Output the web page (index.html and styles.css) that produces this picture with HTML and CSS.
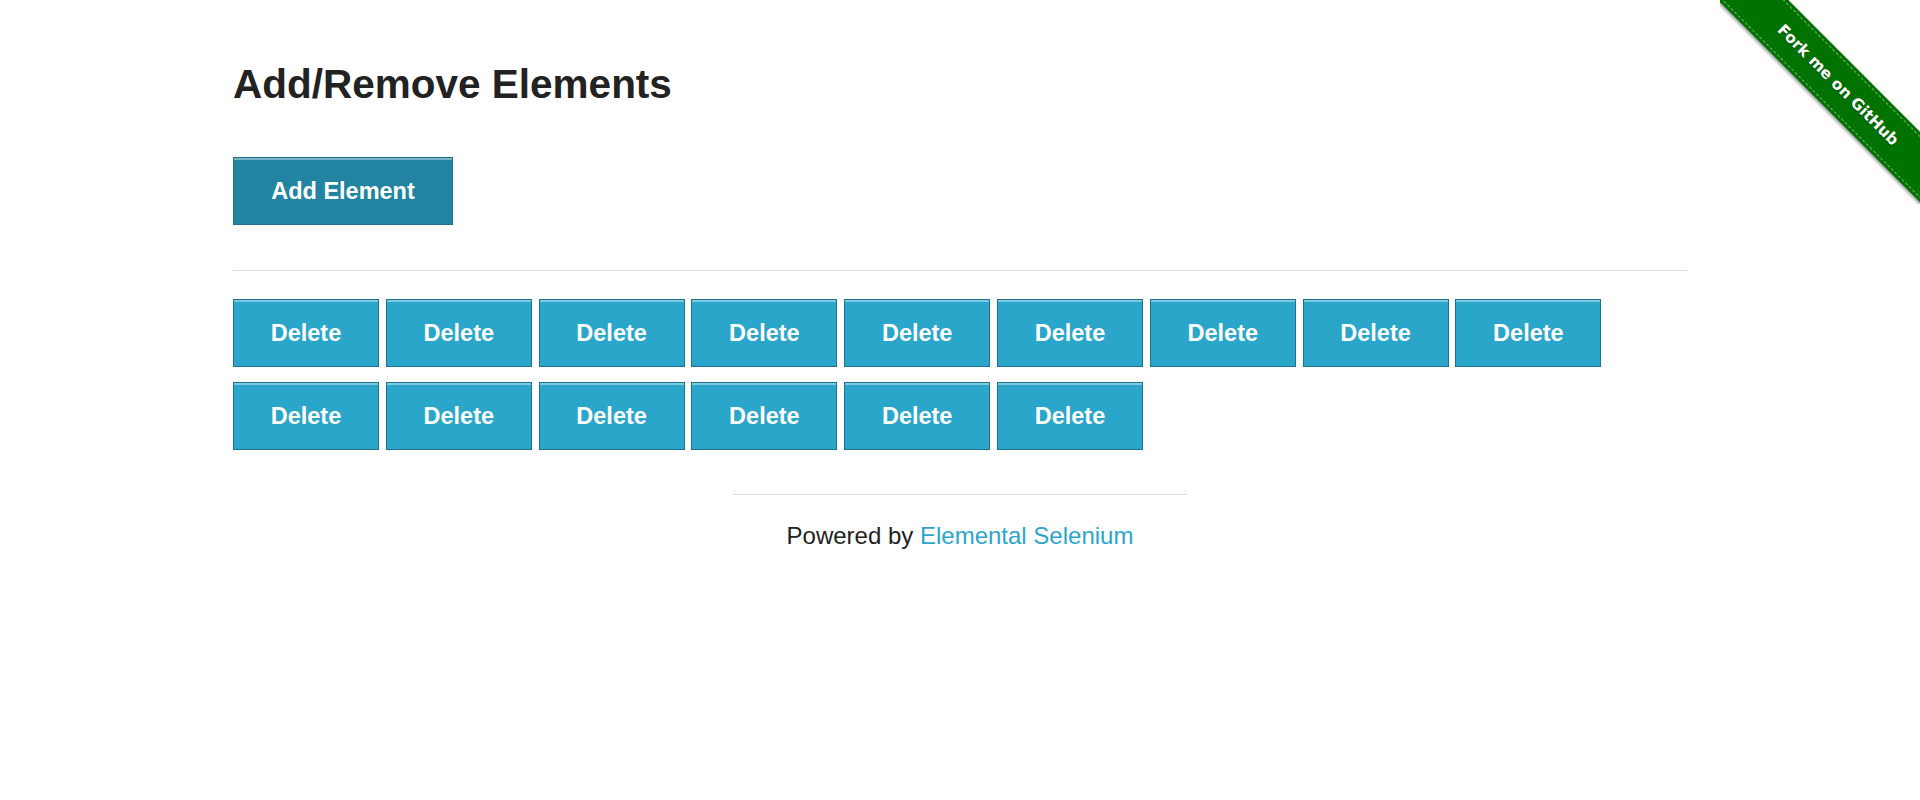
FILE: index.html
```html
<!DOCTYPE html>
<html lang="en">
<head>
<meta charset="utf-8">
<title>The Internet</title>
<link rel="stylesheet" href="styles.css">
</head>
<body>
<div class="ribbon-box">
  <a class="ribbon" href="#"><span class="ribbon-text">Fork me on GitHub</span></a>
</div>
<div class="page">
  <div class="example">
    <h3 class="title">Add/Remove Elements</h3>
    <button class="button button-add">Add Element</button>
    <div class="elements">
      <button class="button">Delete</button>
      <button class="button">Delete</button>
      <button class="button">Delete</button>
      <button class="button">Delete</button>
      <button class="button">Delete</button>
      <button class="button">Delete</button>
      <button class="button">Delete</button>
      <button class="button">Delete</button>
      <button class="button">Delete</button>
      <button class="button">Delete</button>
      <button class="button">Delete</button>
      <button class="button">Delete</button>
      <button class="button">Delete</button>
      <button class="button">Delete</button>
      <button class="button">Delete</button>
    </div>
  </div>
  <div class="footer">
    <div class="footer-rule"></div>
    <div class="footer-text">Powered by <a class="footer-link" href="#">Elemental Selenium</a></div>
  </div>
</div>
</body>
</html>
```

FILE: styles.css
```css
html, body {
  margin: 0;
  padding: 0;
  background: #fff;
}
body {
  font-family: "Liberation Sans", Arial, sans-serif;
  color: #222;
}
.page {
  width: 1454px;
  margin: 0 auto;
}
.title {
  margin: 61px 0 0;
  font-size: 40.5px;
  line-height: 46px;
  font-weight: bold;
  color: #222;
}
.button {
  box-sizing: border-box;
  display: inline-flex;
  align-items: center;
  justify-content: center;
  height: 68px;
  width: 146px;
  padding: 0;
  margin: 0;
  border: 1px solid #1e728c;
  background: #2ba6cb;
  box-shadow: inset 0 2px 0 rgba(255, 255, 255, 0.4);
  color: #fff;
  font-family: "Liberation Sans", Arial, sans-serif;
  font-weight: bold;
  font-size: 23.5px;
  cursor: pointer;
}
.button-add {
  width: 220px;
  margin-top: 50px;
  background: #2284a1;
}
.elements {
  margin-top: 45px;
  border-top: 1px solid #ddd;
  padding-top: 28px;
  display: flex;
  flex-wrap: wrap;
  column-gap: 6.8px;
  row-gap: 15px;
}
.footer {
  display: flex;
  flex-direction: column;
  align-items: center;
  margin-top: 44px;
}
.footer-rule {
  width: 454px;
  border-top: 1px solid #ddd;
}
.footer-text {
  margin-top: 27px;
  font-size: 24px;
  color: #222;
}
.footer-link {
  color: #2ba6cb;
  text-decoration: none;
}
.ribbon-box {
  position: absolute;
  top: 0;
  right: 0;
  width: 200px;
  height: 204px;
  overflow: hidden;
}
.ribbon {
  position: absolute;
  left: -32px;
  top: 60px;
  width: 300px;
  height: 50px;
  background: #007200;
  transform: rotate(45deg);
  display: flex;
  align-items: center;
  justify-content: center;
  text-decoration: none;
  box-shadow: 0 2px 3px rgba(0, 0, 0, 0.35);
}
.ribbon::before {
  content: "";
  position: absolute;
  left: 0;
  right: 0;
  top: 3px;
  bottom: 3px;
  border-top: 1px dashed rgba(255, 255, 255, 0.45);
  border-bottom: 1px dashed rgba(255, 255, 255, 0.45);
}
.ribbon-text {
  color: #fff;
  font-family: "DejaVu Sans", sans-serif;
  font-weight: bold;
  font-size: 15.5px;
  text-shadow: 0 1px 1px rgba(0, 0, 0, 0.4);
}
```
